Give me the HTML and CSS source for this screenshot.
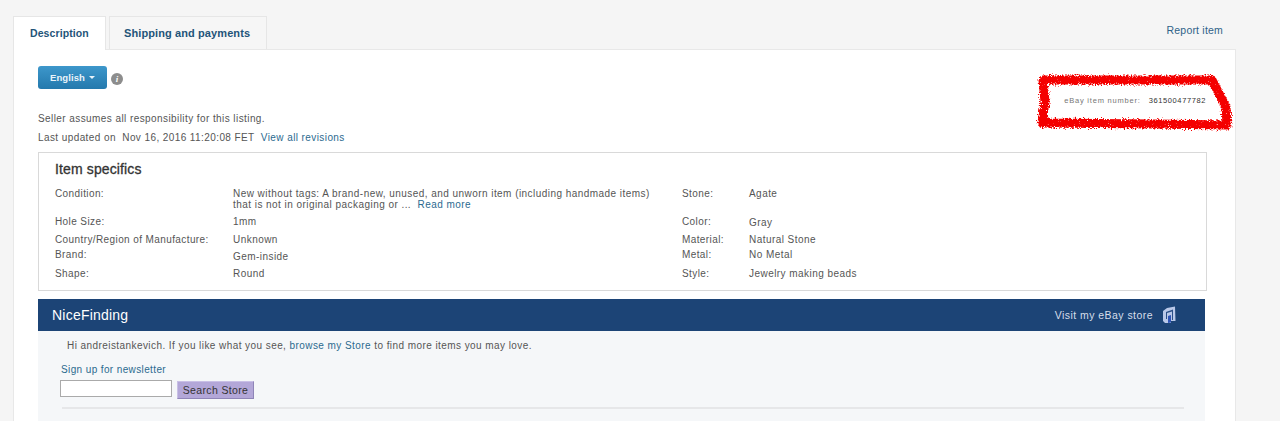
FILE: index.html
```html
<!DOCTYPE html>
<html lang="en">
<head>
<meta charset="utf-8">
<title>Item description</title>
<link rel="stylesheet" href="styles.css">
</head>
<body>
<div class="page">
  <div class="topbar">
    <div class="tabs">
      <div class="tab active">Description</div>
      <div class="tab">Shipping and payments</div>
    </div>
    <a class="report">Report item</a>
  </div>
  <div class="card">
    <div class="head">
      <div class="intro">
        <div class="lang">
          <span class="langbtn">English <i class="caret"></i></span>
          <span class="info">i</span>
        </div>
        <p class="resp">Seller assumes all responsibility for this listing.</p>
        <p class="updated">Last updated on &nbsp;<span class="date">Nov 16, 2016 11:20:08 FET</span> &nbsp;<a>View all revisions</a></p>
      </div>
      <div class="itemno"><span class="lbl">eBay item number:</span><span class="num">361500477782</span></div>
    </div>

    <section class="specs">
      <h2>Item specifics</h2>
      <div class="grid">
        <div class="k r1">Condition:</div>
        <div class="v r1">New without tags: A brand-new, unused, and unworn item (including handmade items)<br>that is not in original packaging or ... &nbsp;<a>Read more</a></div>
        <div class="k r1">Stone:</div>
        <div class="v r1">Agate</div>

        <div class="k r2">Hole Size:</div>
        <div class="v r2">1mm</div>
        <div class="k r2">Color:</div>
        <div class="v r2 low">Gray</div>

        <div class="k r3">Country/Region of Manufacture:</div>
        <div class="v r3">Unknown</div>
        <div class="k r3">Material:</div>
        <div class="v r3">Natural Stone</div>

        <div class="k r4">Brand:</div>
        <div class="v r4 low">Gem-inside</div>
        <div class="k r4">Metal:</div>
        <div class="v r4">No Metal</div>

        <div class="k r5">Shape:</div>
        <div class="v r5">Round</div>
        <div class="k r5">Style:</div>
        <div class="v r5">Jewelry making beads</div>
      </div>
    </section>

    <section class="store">
      <div class="storebar">
        <span class="storename">NiceFinding</span>
        <span class="visit">Visit my eBay store
          <svg class="doors" width="14" height="18" viewBox="0 0 14 18" aria-hidden="true">
            <path d="M1 5 L5 2 L13 0.5 L13.5 15 L9 15 L9 17 L3 17 L1 15 Z" fill="#b9c8e8"/>
            <path d="M4 6 L11 3.5 L11 14 L10 14 L10 5.5 L5 7 L5 13 L4 13 Z" fill="#2a4f86"/>
            <path d="M6 10 L9 9 L9 16.5 L6 17 Z" fill="#2f55b5"/>
          </svg>
        </span>
      </div>
      <div class="storebody">
        <p class="hi">Hi andreistankevich. If you like what you see, <a>browse my Store</a> to find more items you may love.</p>
        <a class="signup">Sign up for newsletter</a>
        <div class="searchrow">
          <input class="search" type="text" aria-label="Search">
          <button class="searchbtn" type="button">Search Store</button>
        </div>
        <div class="rule"></div>
      </div>
    </section>

    <svg class="scribble" width="204" height="64" viewBox="0 0 204 64" aria-hidden="true">
      <defs>
        <filter id="rough" x="-5%" y="-20%" width="110%" height="140%">
          <feTurbulence type="fractalNoise" baseFrequency="0.7" numOctaves="2" seed="4" result="wob"/>
          <feDisplacementMap in="SourceGraphic" in2="wob" scale="7" result="line"/>
          <feTurbulence type="fractalNoise" baseFrequency="0.9" numOctaves="1" seed="9"/>
          <feColorMatrix type="matrix" values="0 0 0 0 0  0 0 0 0 0  0 0 0 0 0  0 0 0 -6 5.1" result="holes"/>
          <feComposite in="line" in2="holes" operator="in"/>
        </filter>
      </defs>
      <path d="M9 10 L178 10 L192 37 L193 55 L120 54 L8 53 L11 32 Z" fill="none" stroke="#f40000" stroke-width="9" stroke-linejoin="round" filter="url(#rough)"/>
    </svg>
  </div>
</div>
</body>
</html>
```
FILE: styles.css
```css
* { box-sizing: border-box; }
html, body { margin: 0; height: 421px; overflow: hidden; }
body {
  background: #f5f5f5;
  color: #555;
  font-family: "Liberation Sans", Arial, sans-serif;
  font-size: 10px;
  letter-spacing: .42px;
}
a { color: #2b6a8f; }
p { margin: 0; }

.page { padding: 16px 44px 0 13px; }

.topbar { display: flex; justify-content: space-between; height: 33px; }
.tabs { display: flex; }
.tab {
  height: 33px;
  padding: 10px 16px 0 14px;
  margin-right: 3px;
  border: 1px solid #e6e6e6;
  border-bottom: 0;
  color: #1f5479;
  font-size: 11px;
  font-weight: 700;
  letter-spacing: .1px;
  background: #f6f6f6;
}
.tab.active {
  background: #fff;
  position: relative;
  z-index: 1;
  width: 93px;
  height: 34px;
  padding-left: 16px;
  padding-right: 0;
  font-size: 10.5px;
}
.report { padding: 8px 13px 0 0; font-size: 10.5px; color: #2f6288; letter-spacing: .2px; }

.card {
  position: relative;
  height: 372px;
  padding: 16px 28px 0 24px;
  background: #fff;
  border: 1px solid #e8e8e8;
  border-bottom: 0;
}
.head { display: flex; justify-content: space-between; height: 86px; }
.lang { display: flex; align-items: center; gap: 4px; height: 23px; }
.langbtn {
  width: 69px;
  height: 23px;
  padding: 6px 0 0 12px;
  border-radius: 3px;
  background: linear-gradient(#3d97cb, #2479ad);
  color: #e9f3fa;
  font-size: 9.5px;
  font-weight: 700;
  letter-spacing: .1px;
}
.caret {
  display: inline-block;
  width: 0; height: 0;
  margin-left: 1px;
  vertical-align: 2px;
  border: 3px solid transparent;
  border-top-color: #e9f3fa;
  border-bottom: 0;
}
.info {
  width: 12px; height: 12px;
  margin-top: 3px;
  border-radius: 50%;
  background: #8d8d8d;
  color: #fff;
  font: italic 700 9px/12px "Liberation Serif", serif;
  text-align: center;
  letter-spacing: 0;
}
.resp { margin-top: 23px; line-height: 14px; }
.updated { margin-top: 5px; line-height: 14px; letter-spacing: .41px; }
.itemno { padding: 30px 1px 0 0; font-size: 7.5px; letter-spacing: .6px; display: flex; gap: 8px; }
.itemno .lbl { color: #777; letter-spacing: .8px; }
.itemno .num { color: #333; }

.specs {
  height: 139px;
  border: 1px solid #d9d9d9;
  padding: 7px 0 0 16px;
}
.specs h2 {
  margin: 0;
  height: 18px;
  color: #333;
  font-size: 14px;
  font-weight: 400;
  -webkit-text-stroke: .3px #333;
  line-height: 18px;
  letter-spacing: .13px;
}
.grid {
  display: grid;
  grid-template-columns: 178px 449px 67px 1fr;
  grid-template-rows: 28px 17px 16px 18px 16px;
  margin-top: 8px;
  line-height: 11px;
}
.k { letter-spacing: .4px; }
.v { letter-spacing: .45px; }
.grid .r1 { padding-top: 2px; }
.grid .r2 { padding-top: 2px; }
.grid .r2.low { padding-top: 3px; }
.grid .r3 { padding-top: 3px; }
.grid .r4 { padding-top: 2px; }
.grid .r4.low { padding-top: 4px; }
.grid .r5 { padding-top: 3px; }

.store { margin-top: 8px; background: #f5f7f9; height: 122px; width: 1167px; }
.storebar {
  display: flex;
  justify-content: space-between;
  align-items: center;
  height: 32px;
  padding: 0 29px 1px 14px;
  background: #1c4476;
  color: #fff;
}
.storename { font-size: 14px; letter-spacing: .22px; }
.visit { display: flex; align-items: center; gap: 9px; color: #d6deea; font-size: 10.5px; letter-spacing: .45px; }
.storebody { padding: 9px 21px 0 23px; }
.hi { padding-left: 6px; line-height: 12px; letter-spacing: .43px; }
.signup { display: block; margin-top: 12px; line-height: 12px; letter-spacing: .38px; }
.searchrow { display: flex; align-items: flex-start; gap: 5px; margin: 4px 0 0 -1px; }
.search {
  width: 112px;
  height: 17px;
  margin: 0;
  padding: 0;
  background: #fff;
  border: 1px solid #aaa;
}
.searchbtn {
  width: 77px;
  height: 18px;
  margin: 1px 0 0;
  padding: 0;
  background: #b3a7d8;
  border: 1px solid #8f85b8;
  border-top-color: #c9c0e6;
  border-left-color: #c9c0e6;
  color: #333;
  font: 10.5px "Liberation Sans", Arial, sans-serif;
  letter-spacing: .35px;
}
.rule { height: 2px; margin: 8px 0 0 1px; background: #e6e7e9; }

.scribble { position: absolute; top: 20px; left: 1020px; }
```
